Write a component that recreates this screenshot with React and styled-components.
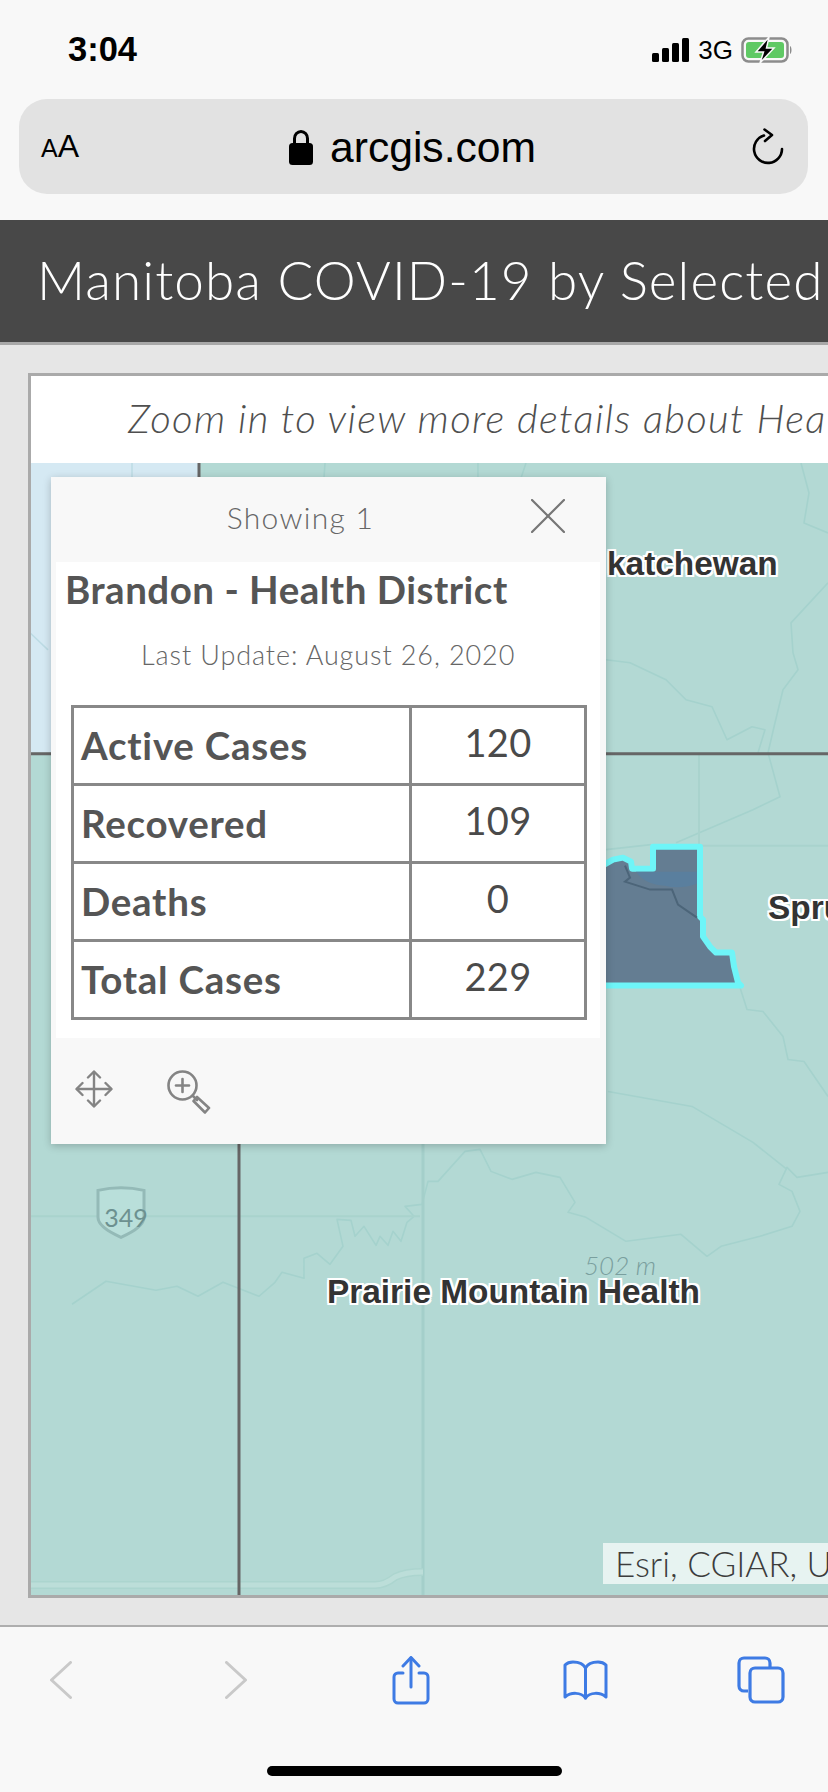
import React from 'react';
import styled, { createGlobalStyle } from 'styled-components';

const GlobalStyle = createGlobalStyle`
  html, body {
    margin: 0;
    padding: 0;
    background: #f8f8f8;
  }
  * {
    box-sizing: border-box;
  }
`;

const Screen = styled.div`
  width: 828px;
  height: 1792px;
  display: flex;
  flex-direction: column;
  overflow: hidden;
  background: #f8f8f8;
  font-family: "Lato", "Liberation Sans", sans-serif;
`;

// safari top
const BrowserTop = styled.div`
  height: 220px;
  flex: none;
  padding: 0 20px 0 19px;
`;

const StatusRow = styled.div`
  height: 99px;
  display: flex;
  align-items: flex-start;
  justify-content: space-between;
  padding: 32px 15px 0 49px;
  font-family: "Liberation Sans", sans-serif;
  color: #000;
`;

const Clock = styled.span`
  font-size: 34.5px;
  line-height: 34px;
  font-weight: 700;
`;

const StatusIcons = styled.div`
  display: flex;
  align-items: center;
  gap: 8px;
  height: 28px;
  margin-top: 4px;
`;

const Network = styled.span`
  font-size: 26px;
  line-height: 28px;
`;

const UrlBar = styled.div`
  height: 95px;
  border-radius: 28px;
  background: #e2e2e2;
  display: grid;
  grid-template-columns: 1fr auto 1fr;
  align-items: center;
  padding: 0 24px 0 22px;
  font-family: "Liberation Sans", sans-serif;
  color: #000;
`;

const TextSize = styled.div`
  display: flex;
  align-items: baseline;
`;

const SmallA = styled.span`
  font-size: 25px;
`;

const BigA = styled.span`
  font-size: 32px;
`;

const Address = styled.div`
  display: flex;
  align-items: center;
  gap: 17px;
  font-size: 42.6px;
  line-height: 50px;
`;

const ReloadSlot = styled.div`
  display: flex;
  justify-content: flex-end;
`;

const Banner = styled.header`
  height: 125px;
  flex: none;
  background: #484848;
  border-bottom: 3px solid #a8a8a8;
  color: #fff;
  font-size: 53px;
  font-weight: 300;
  letter-spacing: 1.1px;
  line-height: 120px;
  padding-left: 37px;
  white-space: nowrap;
  overflow: hidden;
`;

const Content = styled.main`
  flex: 1;
  min-height: 0;
  background: #e6e6e6;
  padding: 28px 0 27px 28px;
  display: flex;
`;

const Frame = styled.section`
  flex: 1;
  min-width: 0;
  border: 3px solid #aaa;
  border-right: none;
  display: flex;
  flex-direction: column;
  background: #fff;
`;

const Note = styled.div`
  height: 87px;
  flex: none;
  padding-left: 97px;
  font-size: 40px;
  font-style: italic;
  font-weight: 300;
  letter-spacing: 1.35px;
  line-height: 84px;
  color: #4f4f4f;
  white-space: nowrap;
  overflow: hidden;
`;

const MapArea = styled.div`
  position: relative;
  flex: 1;
  overflow: hidden;
  background: #b3d9d4;
`;

const MapDrawing = styled.svg`
  position: absolute;
  inset: 0;
  width: 100%;
  height: 100%;
`;

const halo = `
  -2px 0 0 #fff, 2px 0 0 #fff, 0 -2px 0 #fff, 0 2px 0 #fff,
  -2px -2px 0 #fff, 2px -2px 0 #fff, -2px 2px 0 #fff, 2px 2px 0 #fff
`;

// x,y are the label's spot on the map
const PlaceLabel = styled.span`
  position: absolute;
  left: ${(p) => p.$x}px;
  top: ${(p) => p.$y}px;
  font-family: "Liberation Sans", sans-serif;
  font-weight: 700;
  font-size: 33.4px;
  line-height: 36px;
  color: #333;
  white-space: nowrap;
  text-shadow: ${halo};
`;

const Elevation = styled.span`
  position: absolute;
  left: 553px;
  top: 787px;
  font-size: 26px;
  line-height: 30px;
  font-style: italic;
  font-weight: 300;
  color: #7a9f9e;
`;

const RouteNumber = styled.span`
  position: absolute;
  left: 70px;
  top: 740px;
  width: 50px;
  text-align: center;
  font-size: 25px;
  line-height: 28px;
  color: #6d9190;
`;

const Attribution = styled.div`
  position: absolute;
  right: 0;
  bottom: 11px;
  width: 225px;
  height: 41px;
  padding-left: 12px;
  background: rgba(255, 255, 255, 0.68);
  font-size: 35px;
  font-weight: 300;
  line-height: 41px;
  color: #3c3c3c;
  white-space: nowrap;
  overflow: hidden;
`;

const Popup = styled.div`
  position: absolute;
  left: 20px;
  top: 14px;
  width: 555px;
  height: 667px;
  display: flex;
  flex-direction: column;
  background: #f8f8f8;
  box-shadow: 0 2px 8px rgba(0, 0, 0, 0.22);
`;

const PopupHead = styled.div`
  height: 83px;
  flex: none;
  position: relative;
  text-align: center;
  font-size: 30px;
  font-weight: 300;
  line-height: 80px;
  letter-spacing: 1.3px;
  color: #666;
  padding-right: 56px;
`;

const CloseButton = styled.button`
  position: absolute;
  top: 22px;
  right: 41px;
  width: 34px;
  height: 34px;
  padding: 0;
  border: none;
  background: none;
`;

const PopupBody = styled.div`
  flex: none;
  height: 476px;
  margin: 2px 6px 0 5px;
  background: #fff;
  padding: 3px 0 0 9px;
  color: #555;
`;

const PopupTitle = styled.h2`
  margin: 0;
  font-size: 38.5px;
  font-weight: 700;
  letter-spacing: 0.5px;
  line-height: 48px;
`;

const Updated = styled.p`
  margin: 25px 0 0 76px;
  font-size: 27px;
  font-weight: 300;
  line-height: 34px;
  letter-spacing: 0.9px;
  color: #666;
`;

const StatsTable = styled.table`
  width: 516px;
  margin: 33px 0 0 6px;
  border-collapse: collapse;
  table-layout: fixed;
  border: 3px solid #888;
`;

const StatRow = styled.tr`
  height: 78px;
`;

const StatLabel = styled.th`
  width: 338px;
  padding: 0 0 2px 7px;
  border: 3px solid #888;
  text-align: left;
  font-size: 38.5px;
  font-weight: 700;
  letter-spacing: 0.75px;
  color: #555;
`;

const StatValue = styled.td`
  padding: 0 0 8px 0;
  border: 3px solid #888;
  text-align: center;
  font-size: 38px;
  font-weight: 400;
  letter-spacing: 0.3px;
  color: #4a4a4a;
`;

const PopupFoot = styled.div`
  flex: 1;
  margin-top: 5px;
  display: flex;
  align-items: flex-start;
  gap: 54px;
  padding: 27px 0 0 24px;
`;

const Toolbar = styled.nav`
  height: 167px;
  flex: none;
  border-top: 2px solid #aeaeae;
  background: #f8f8f8;
  position: relative;
`;

// the five slots are wider than the screen share, so the row starts left of it
const ToolbarIcons = styled.div`
  display: grid;
  grid-template-columns: repeat(5, 175px);
  margin-left: -27px;
  height: 106px;
  justify-items: center;
  align-items: center;
`;

const HomeBar = styled.div`
  position: absolute;
  left: 267px;
  bottom: 16px;
  width: 295px;
  height: 10px;
  border-radius: 5px;
  background: #000;
`;

const stats = [
  { label: 'Active Cases', value: 120 },
  { label: 'Recovered', value: 109 },
  { label: 'Deaths', value: 0 },
  { label: 'Total Cases', value: 229 },
];

const Signal = () => (
  <svg width="38" height="24" viewBox="0 0 38 24">
    <rect x="0" y="15" width="7" height="9" rx="1.5" fill="#000" />
    <rect x="10" y="10" width="7" height="14" rx="1.5" fill="#000" />
    <rect x="20" y="5" width="7" height="19" rx="1.5" fill="#000" />
    <rect x="30" y="0" width="7" height="24" rx="1.5" fill="#000" />
  </svg>
);

const Battery = () => (
  <svg width="52" height="26" viewBox="0 0 52 26">
    <rect x="1.5" y="1.5" width="45" height="23" rx="6" fill="none" stroke="#8c8c8c" strokeWidth="2.5" />
    <rect x="5" y="5" width="38" height="16" rx="3" fill="#5fc964" />
    <path d="M49 9 C51 10 51 16 49 17 Z" fill="#8c8c8c" />
    <path d="M28 0 L15 15 L22.5 15 L19 26 L33 11 L25.5 11 Z" fill="#000" stroke="#f8f8f8" strokeWidth="1.5" />
  </svg>
);

const Lock = () => (
  <svg width="24" height="36" viewBox="0 0 24 36">
    <path d="M5.5 16 V9.5 a6.5 7 0 0 1 13 0 V16" fill="none" stroke="#000" strokeWidth="3" />
    <rect x="0" y="14" width="24" height="22" rx="3.5" fill="#000" />
  </svg>
);

const Reload = () => (
  <svg width="32" height="37" viewBox="0 0 32 37" fill="none" stroke="#000" strokeWidth="2.6" strokeLinecap="round" strokeLinejoin="round">
    <path d="M12 7.5 A14 14 0 1 0 30 21" />
    <path d="M12.5 1.5 L20 7 L13 13" />
  </svg>
);

const CloseIcon = () => (
  <svg width="34" height="34" viewBox="0 0 34 34" stroke="#777" strokeWidth="2.2" strokeLinecap="round">
    <line x1="1" y1="1" x2="33" y2="33" />
    <line x1="33" y1="1" x2="1" y2="33" />
  </svg>
);

const MoveIcon = () => (
  <svg width="38" height="38" viewBox="0 0 38 38" fill="none" stroke="#848484" strokeWidth="2.4" strokeLinecap="round" strokeLinejoin="round">
    <line x1="19" y1="2" x2="19" y2="36" />
    <line x1="2" y1="19" x2="36" y2="19" />
    <path d="M13 7.5 L19 1.5 L25 7.5" />
    <path d="M13 30.5 L19 36.5 L25 30.5" />
    <path d="M7.5 13 L1.5 19 L7.5 25" />
    <path d="M30.5 13 L36.5 19 L30.5 25" />
  </svg>
);

const ZoomIcon = () => (
  <svg width="44" height="44" viewBox="0 0 44 44" fill="none" stroke="#848484" strokeWidth="2.6" strokeLinecap="round" strokeLinejoin="round">
    <circle cx="15.5" cy="15.5" r="14" />
    <line x1="15.5" y1="9" x2="15.5" y2="22" />
    <line x1="9" y1="15.5" x2="22" y2="15.5" />
    <line x1="26" y1="26" x2="30" y2="30" />
    <path d="M30 27 L42 38 L38 42.5 L26.5 31 Z" />
  </svg>
);

const Chevron = ({ flip }) => (
  <svg width="22" height="38" viewBox="0 0 22 38" fill="none" stroke="#c9c9c9" strokeWidth="3" strokeLinecap="round" strokeLinejoin="round">
    <path d={flip ? 'M1.5 1.5 L20.5 19 L1.5 36.5' : 'M20.5 1.5 L1.5 19 L20.5 36.5'} />
  </svg>
);

const ShareIcon = () => (
  <svg width="38" height="49" viewBox="0 0 38 49" fill="none" stroke="#3e7be4" strokeWidth="3" strokeLinecap="round" strokeLinejoin="round">
    <path d="M11 17 H6 a4 4 0 0 0 -4 4 V43 a4 4 0 0 0 4 4 H32 a4 4 0 0 0 4 -4 V21 a4 4 0 0 0 -4 -4 H27" />
    <line x1="19" y1="2" x2="19" y2="31" />
    <path d="M11 10 L19 1.5 L27 10" />
  </svg>
);

const BookIcon = () => (
  <svg width="45" height="40" viewBox="0 0 45 40" fill="none" stroke="#3e7be4" strokeWidth="3" strokeLinecap="round" strokeLinejoin="round">
    <path d="M22.5 8 C20 3 15 2 10 2 C7 2 4 3 2 5 V37 C8 32 18 32 22.5 38 C27 32 37 32 43 37 V5 C41 3 38 2 35 2 C30 2 25 3 22.5 8 Z" />
    <line x1="22.5" y1="8" x2="22.5" y2="38" />
  </svg>
);

const TabsIcon = () => (
  <svg width="48" height="48" viewBox="0 0 48 48" fill="none" stroke="#3e7be4" strokeWidth="3.2" strokeLinejoin="round">
    <path d="M11 35 H7 a5 5 0 0 1 -5 -5 V7 a5 5 0 0 1 5 -5 H28 a5 5 0 0 1 5 5 V12" />
    <rect x="13" y="12" width="33" height="34" rx="5" />
  </svg>
);

const MapShapes = () => (
  <MapDrawing viewBox="31 463 797 1133" preserveAspectRatio="none">
    {/* lake top left */}
    <path d="M31 463 H199 V753 H31 Z" fill="#d5e9f3" />
    <path d="M30 633 L48 650" fill="none" stroke="#bcdbe4" strokeWidth="1.5" />
    <path d="M132 463 V478" fill="none" stroke="#bcdbe4" strokeWidth="1.5" />

    {/* faint contours */}
    <g fill="none" stroke="#a5d2cd" strokeWidth="1.6" strokeLinejoin="round">
      <path d="M72 1305 L106 1282 L156 1291 L177 1287 L198 1297 L223 1283 L259 1297 L275 1283 L282 1273 L304 1279 L304 1259 L317 1254 L330 1265 L343 1247 L337 1220 L351 1221 L355 1237 L364 1227 L376 1246 L380 1237 L388 1246 L393 1232 L401 1242 L407 1223 L414 1217 L405 1207 L422 1205 L428 1182 L438 1182 L465 1152 L480 1150 L491 1172 L512 1180 L536 1173 L560 1178 L575 1203 L568 1213 L586 1218 L626 1242 L681 1235 L707 1257 L721 1247 L760 1237 L792 1227 L800 1212 L792 1192 L779 1185 L787 1168 L797 1178 L828 1173" />
      <path d="M608 1092 L692 1107 L753 1143 L787 1170" />
      <path d="M740 988 L747 1010 L763 1012 L783 1037 L788 1060 L804 1062 L828 1097" />
      <path d="M801 463 L809 493 L804 523 L828 533" />
      <path d="M828 583 L791 623 L793 653 L798 670 L783 690 L775 723 L768 753 L780 797 L753 810 L676 843" />
      <path d="M606 660 L630 663 L666 680 L686 700 L712 707 L727 740 L752 727 L765 730 L758 753" />
      <path d="M325 463 L324 478 M478 463 V478 M526 463 L521 478" />
      <path d="M606 850 L651 845" />
    </g>
    <path d="M699 753 V846 M702 846 H828" fill="none" stroke="#a9d3cd" strokeWidth="2" />
    <path d="M31 1217 H420" fill="none" stroke="#a9d3cd" strokeWidth="2" />
    <path d="M423 1143 V1596" fill="none" stroke="#a4cfca" strokeWidth="3" />
    <path d="M31 1586 H375 Q385 1586 395 1578 Q405 1573 423 1573" fill="none" stroke="#acd5cf" strokeWidth="8" />
    <path d="M31 1586 H375 Q385 1586 395 1578 Q405 1573 423 1573" fill="none" stroke="#bcdeD9" strokeWidth="5" />

    {/* boundary lines */}
    <g fill="none" stroke="#666" strokeWidth="3">
      <path d="M199 463 V480" />
      <path d="M31 754 H52 M606 754 H828" />
      <path d="M239 1140 V1596" />
    </g>

    {/* selected district, its left part runs on under the popup */}
    <path
      d="M585 873 L606 864 L613 860 L623 858 L631 862 L632 869 L653 869 L653 847 L700 847 L700 917 L703 920 L703 937 L710 947 L716 953 L732 953 L734 967 L738 983 L741 986 L585 986 Z"
      fill="#647d92"
      stroke="#6ef5f8"
      strokeWidth="6"
      strokeLinejoin="round"
    />
    <path d="M636 872 H697 V884 Q680 890 665 886 Q645 885 636 872 Z" fill="#5a7f9e" />
    <path d="M625 866 L630 878 L625 882 L650 890 L672 890 L678 905 L697 918" fill="none" stroke="#4c6579" strokeWidth="2" />

    {/* route shield */}
    <path d="M98 1191 Q121 1186 144 1191 V1218 Q144 1228 121 1238 Q98 1228 98 1218 Z" fill="#b9dfda" stroke="#94bab7" strokeWidth="3" />
  </MapDrawing>
);

export default function App() {
  return (
    <Screen>
      <GlobalStyle />
      <BrowserTop>
        <StatusRow>
          <Clock>3:04</Clock>
          <StatusIcons>
            <Signal />
            <Network>3G</Network>
            <Battery />
          </StatusIcons>
        </StatusRow>
        <UrlBar>
          <TextSize>
            <SmallA>A</SmallA>
            <BigA>A</BigA>
          </TextSize>
          <Address>
            <Lock />
            arcgis.com
          </Address>
          <ReloadSlot>
            <Reload />
          </ReloadSlot>
        </UrlBar>
      </BrowserTop>

      <Banner>Manitoba COVID-19 by Selected</Banner>

      <Content>
        <Frame>
          <Note>Zoom in to view more details about Hea</Note>
          <MapArea>
            <MapShapes />
            <PlaceLabel $x={576} $y={83}>katchewan</PlaceLabel>
            <PlaceLabel $x={737} $y={427}>Spru</PlaceLabel>
            <Elevation>502 m</Elevation>
            <PlaceLabel $x={296} $y={811}>Prairie Mountain Health</PlaceLabel>
            <RouteNumber>349</RouteNumber>
            <Attribution>Esri, CGIAR, U</Attribution>

            <Popup>
              <PopupHead>
                Showing 1
                <CloseButton aria-label="Close">
                  <CloseIcon />
                </CloseButton>
              </PopupHead>
              <PopupBody>
                <PopupTitle>Brandon - Health District</PopupTitle>
                <Updated>Last Update: August 26, 2020</Updated>
                <StatsTable>
                  <tbody>
                    {stats.map((stat) => (
                      <StatRow key={stat.label}>
                        <StatLabel>{stat.label}</StatLabel>
                        <StatValue>{stat.value}</StatValue>
                      </StatRow>
                    ))}
                  </tbody>
                </StatsTable>
              </PopupBody>
              <PopupFoot>
                <MoveIcon />
                <ZoomIcon />
              </PopupFoot>
            </Popup>
          </MapArea>
        </Frame>
      </Content>

      <Toolbar>
        <ToolbarIcons>
          <Chevron />
          <Chevron flip />
          <ShareIcon />
          <BookIcon />
          <TabsIcon />
        </ToolbarIcons>
        <HomeBar />
      </Toolbar>
    </Screen>
  );
}
